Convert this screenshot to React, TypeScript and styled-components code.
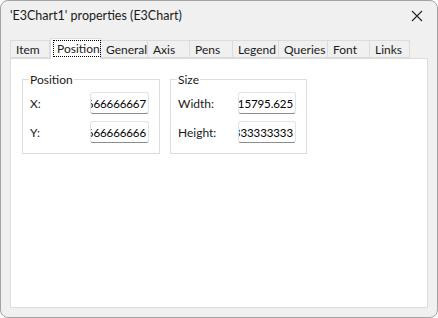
import styled, { createGlobalStyle } from "styled-components";

const GlobalStyle = createGlobalStyle`
	body {
		margin: 0;
		background: #ffffff;
		font-family: Lato, "Liberation Sans", sans-serif;
		font-size: 12px;
		color: #1a1a1a;
	}
`;

const Window = styled.div`
	width: 438px;
	height: 318px;
	box-sizing: border-box;
	border: 1px solid #a3a3a3;
	border-radius: 8px;
	background: #f0f0f0;
	display: flex;
	flex-direction: column;
	overflow: hidden;
`;

const TitleBar = styled.div`
	height: 29px;
	display: flex;
	align-items: center;
	justify-content: space-between;
	padding: 0 8px 0 9px;
	font-size: 12.5px;
`;

const CloseButton = styled.div`
	width: 24px;
	height: 24px;
	display: flex;
	align-items: center;
	justify-content: center;
`;

const Body = styled.div`
	flex: 1;
	display: flex;
	flex-direction: column;
	padding: 8px 8px 9px 9px;
`;

const TabStrip = styled.div`
	display: flex;
	align-items: flex-end;
	height: 20px;
	position: relative;
	z-index: 1;
`;

const Tab = styled.div<{ $w: number; $active?: boolean }>`
	width: ${(p) => p.$w}px;
	box-sizing: border-box;
	height: ${(p) => (p.$active ? 21 : 18)}px;
	margin-bottom: ${(p) => (p.$active ? -1 : 0)}px;
	padding: ${(p) => (p.$active ? "1px 2px 2px" : "1px 0 0 5px")};
	background: ${(p) => (p.$active ? "#ffffff" : "#f0f0f0")};
	border: 1px solid #dcdcdc;
	border-bottom: ${(p) => (p.$active ? "none" : "1px solid #dcdcdc")};
	border-left: ${(p) => (p.$active ? "1px solid #dcdcdc" : "none")};
	display: flex;
	align-items: center;
	white-space: nowrap;
	&:first-child {
		border-left: 1px solid #dcdcdc;
	}
`;

const FocusLabel = styled.span`
	flex: 1;
	height: 100%;
	box-sizing: border-box;
	border: 1px dotted #000;
	display: flex;
	align-items: center;
	padding-left: 3px;
`;

const Panel = styled.div`
	flex: 1;
	background: #ffffff;
	border: 1px solid #dcdcdc;
	margin-right: 1px;
	display: flex;
	align-items: flex-start;
	gap: 10px;
	padding: 13px 11px;
`;

const GroupBox = styled.fieldset<{ $w: number }>`
	width: ${(p) => p.$w}px;
	box-sizing: border-box;
	margin: 0;
	border: 1px solid #dcdcdc;
	padding: 5px 10px 10px 7px;
	display: grid;
	grid-template-columns: 60px 1fr;
	row-gap: 7px;
	align-items: center;
`;

const GroupTitle = styled.legend`
	padding: 0 1px;
	margin-left: -1px;
	font-size: 12px;
`;

const FieldLabel = styled.span`
	font-size: 12px;
`;

const Edit = styled.div`
	height: 22px;
	box-sizing: border-box;
	background: #ffffff;
	border: 1px solid #e3e3e3;
	border-bottom: 1px solid #8c8c8c;
	border-radius: 3px;
	overflow: hidden;
	display: flex;
	align-items: center;
	justify-content: flex-end;
	padding-right: 2px;
	white-space: nowrap;
	font-size: 11.5px;
	letter-spacing: -0.1px;
	color: #000;
`;

const tabs = [
	{ title: "Item", w: 40 },
	{ title: "Position", w: 51, active: true },
	{ title: "General", w: 47 },
	{ title: "Axis", w: 42 },
	{ title: "Pens", w: 43 },
	{ title: "Legend", w: 46 },
	{ title: "Queries", w: 49 },
	{ title: "Font", w: 42 },
	{ title: "Links", w: 40 },
];

const App = () => {
	return (
		<>
			<GlobalStyle />
			<Window>
				<TitleBar>
					<span>'E3Chart1' properties (E3Chart)</span>
					<CloseButton>
						<svg width="12" height="12" viewBox="0 0 12 12">
							<path d="M1 1 L11 11 M11 1 L1 11" stroke="#222" strokeWidth="1.1" />
						</svg>
					</CloseButton>
				</TitleBar>
				<Body>
					<TabStrip>
						{tabs.map((t) => (
							<Tab key={t.title} $w={t.w} $active={t.active}>
								{t.active ? <FocusLabel>{t.title}</FocusLabel> : t.title}
							</Tab>
						))}
					</TabStrip>
					<Panel>
						<GroupBox $w={138}>
							<GroupTitle>Position</GroupTitle>
							<FieldLabel>X:</FieldLabel>
							<Edit>6666666667</Edit>
							<FieldLabel>Y:</FieldLabel>
							<Edit>6666666666</Edit>
						</GroupBox>
						<GroupBox $w={137}>
							<GroupTitle>Size</GroupTitle>
							<FieldLabel>Width:</FieldLabel>
							<Edit>15795.625</Edit>
							<FieldLabel>Height:</FieldLabel>
							<Edit>3333333333</Edit>
						</GroupBox>
					</Panel>
				</Body>
			</Window>
		</>
	);
};

export default App;
